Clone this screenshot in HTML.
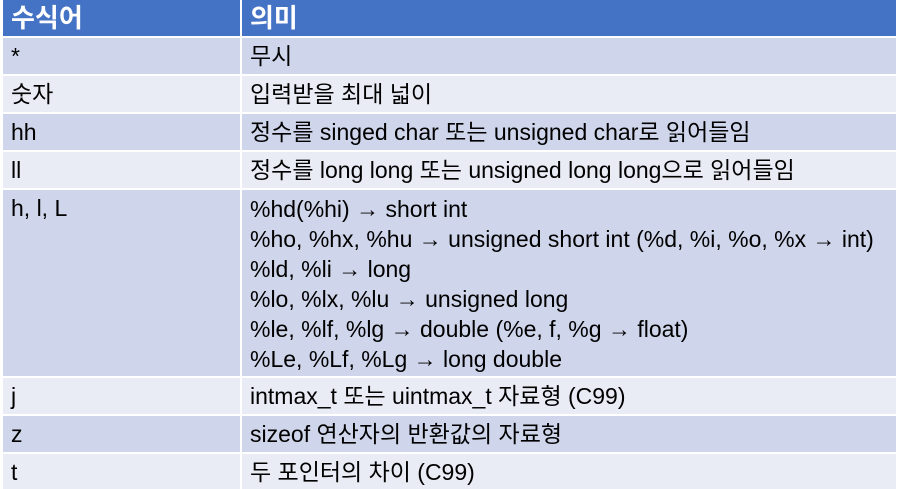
<!DOCTYPE html>
<html><head><meta charset="utf-8"><style>
body{margin:0;width:898px;height:489px;background:#fff;overflow:hidden;font-family:"Liberation Sans","Noto Sans CJK KR",sans-serif;}
.row{position:absolute;left:3px;width:893px;display:flex}
.c{box-sizing:border-box;height:100%;padding-left:8px;font-size:23px;line-height:36px;white-space:nowrap;overflow:hidden}
.a{width:237px;margin-right:2px}
.b{flex:1}
.h .c{background:#4472c4;color:#fff;font-weight:bold;font-size:26px}
.d .c{background:#cfd5ea}
.l .c{background:#e9ebf5}
.m div{height:30px;line-height:30px}
</style></head><body>
<div class="row h" style="top:0;height:36px"><div class="c a">수식어</div><div class="c b">의미</div></div>
<div class="row d" style="top:38px;height:36px"><div class="c a">*</div><div class="c b">무시</div></div>
<div class="row l" style="top:76px;height:36px"><div class="c a">숫자</div><div class="c b">입력받을 최대 넓이</div></div>
<div class="row d" style="top:114px;height:36px"><div class="c a">hh</div><div class="c b">정수를 singed char 또는 unsigned char로 읽어들임</div></div>
<div class="row l" style="top:152px;height:36px"><div class="c a">ll</div><div class="c b">정수를 long long 또는 unsigned long long으로 읽어들임</div></div>
<div class="row d" style="top:190px;height:186px"><div class="c a">h, l, L</div><div class="c b m" style="padding-top:4px">
<div>%hd(%hi) → short int</div>
<div>%ho, %hx, %hu → unsigned short int (%d, %i, %o, %x → int)</div>
<div>%ld, %li → long</div>
<div>%lo, %lx, %lu → unsigned long</div>
<div>%le, %lf, %lg → double (%e, f, %g → float)</div>
<div>%Le, %Lf, %Lg → long double</div>
</div></div>
<div class="row l" style="top:378px;height:36px"><div class="c a">j</div><div class="c b">intmax_t 또는 uintmax_t 자료형 (C99)</div></div>
<div class="row d" style="top:416px;height:36px"><div class="c a">z</div><div class="c b">sizeof 연산자의 반환값의 자료형</div></div>
<div class="row l" style="top:454px;height:35px"><div class="c a">t</div><div class="c b">두 포인터의 차이 (C99)</div></div>
</body></html>
